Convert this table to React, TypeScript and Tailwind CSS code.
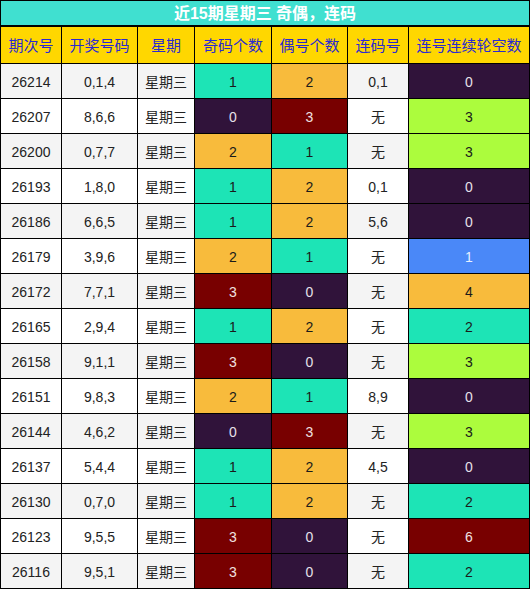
import React from "react";

type Row = [string, string, number, number, string, number];

const rows: Row[] = [
  ["26214", "0,1,4", 1, 2, "0,1", 0],
  ["26207", "8,6,6", 0, 3, "无", 3],
  ["26200", "0,7,7", 2, 1, "无", 3],
  ["26193", "1,8,0", 1, 2, "0,1", 0],
  ["26186", "6,6,5", 1, 2, "5,6", 0],
  ["26179", "3,9,6", 2, 1, "无", 1],
  ["26172", "7,7,1", 3, 0, "无", 4],
  ["26165", "2,9,4", 1, 2, "无", 2],
  ["26158", "9,1,1", 3, 0, "无", 3],
  ["26151", "9,8,3", 2, 1, "8,9", 0],
  ["26144", "4,6,2", 0, 3, "无", 3],
  ["26137", "5,4,4", 1, 2, "4,5", 0],
  ["26130", "0,7,0", 1, 2, "无", 2],
  ["26123", "9,5,5", 3, 0, "无", 6],
  ["26116", "9,5,1", 3, 0, "无", 2],
];

const countCls: Record<number, string> = {
  0: "bg-[#30133a] text-[#e6e0ea]",
  1: "bg-[#1de4b6] text-[#1a1a1a]",
  2: "bg-[#f8bb3c] text-[#1a1a1a]",
  3: "bg-[#780000] text-[#f0e0e0]",
};

const kongCls: Record<number, string> = {
  0: "bg-[#30133a] text-[#e6e0ea]",
  1: "bg-[#4a88f8] text-[#e8f0ff]",
  2: "bg-[#1de4b6] text-[#1a1a1a]",
  3: "bg-[#acfc3d] text-[#1a1a1a]",
  4: "bg-[#f8bb3c] text-[#1a1a1a]",
  6: "bg-[#780000] text-[#f0e0e0]",
};

const headers = ["期次号", "开奖号码", "星期", "奇码个数", "偶号个数", "连码号", "连号连续轮空数"];

const font = { fontFamily: '"Liberation Sans", Arial, "Noto Sans CJK SC", sans-serif' };

const cell = "text-[14px] flex items-center justify-center pt-[2px]";

export default function App() {
  return (
    <div className="w-[530px] h-[589px] bg-black p-px flex flex-col gap-[2px]" style={font}>
      <div className="h-[24px] bg-[#40e0d0] flex items-center justify-center pt-[2px] text-white font-bold text-[16px]">
        近15期星期三 奇偶，连码
      </div>
      <div className="grid grid-cols-[60px_75px_56px_76px_75px_60px_120px] grid-rows-[36px_repeat(15,34px)] gap-px">
        {headers.map((h) => (
          <div key={h} className="bg-[#ffd700] text-[#2a2ad0] text-[15px] flex items-center justify-center pt-[2px]">
            {h}
          </div>
        ))}
        {rows.map((r, i) => {
          const base = i % 2 === 0 ? "bg-[#f4f4f4]" : "bg-white";
          const plain = `${base} text-[#222] ${cell}`;
          return (
            <React.Fragment key={r[0]}>
              <div className={plain}>{r[0]}</div>
              <div className={plain}>{r[1]}</div>
              <div className={plain}>星期三</div>
              <div className={`${countCls[r[2]]} ${cell}`}>{r[2]}</div>
              <div className={`${countCls[r[3]]} ${cell}`}>{r[3]}</div>
              <div className={plain}>{r[4]}</div>
              <div className={`${kongCls[r[5]]} ${cell}`}>{r[5]}</div>
            </React.Fragment>
          );
        })}
      </div>
    </div>
  );
}
